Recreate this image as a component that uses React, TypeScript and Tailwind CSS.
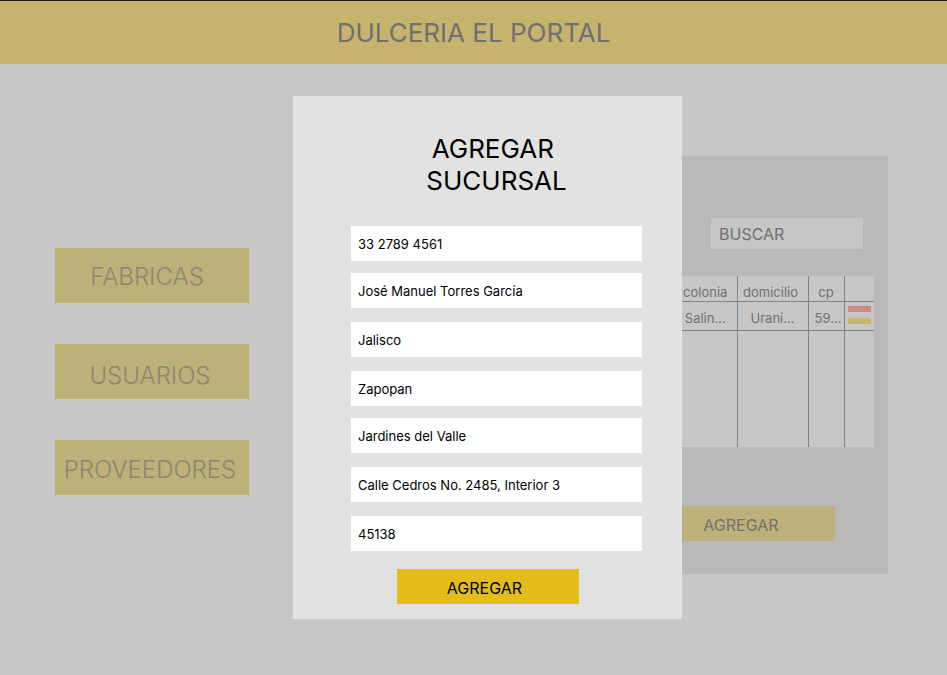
const navItems = [
  { label: "FABRICAS", pad: "pr-2.5 pt-0.5" },
  { label: "USUARIOS", pad: "pr-1 pt-2" },
  { label: "PROVEEDORES", pad: "pr-1 pt-1" },
];

const fields = [
  { name: "telefono", label: "Teléfono", value: "33 2789 4561", gap: "" },
  { name: "encargado", label: "Encargado", value: "José Manuel Torres García", gap: "mt-3" },
  { name: "estado", label: "Estado", value: "Jalisco", gap: "mt-3.5" },
  { name: "municipio", label: "Municipio", value: "Zapopan", gap: "mt-3.5" },
  { name: "colonia", label: "Colonia", value: "Jardines del Valle", gap: "mt-3" },
  { name: "domicilio", label: "Domicilio", value: "Calle Cedros No. 2485, Interior 3", gap: "mt-3.5" },
  { name: "cp", label: "Código postal", value: "45138", gap: "mt-3.5" },
];

function Header() {
  return (
    <header className="flex h-16 items-center justify-center border-t border-[#1e1e1e] bg-[#c5b36e]">
      <h1 className="text-[26px] leading-8 text-[#707070]">DULCERIA EL PORTAL</h1>
    </header>
  );
}

function Sidebar() {
  return (
    <nav className="mt-[184px] flex w-[194px] shrink-0 flex-col gap-[41px]">
      {navItems.map((item) => (
        <button
          key={item.label}
          type="button"
          className={`flex h-[55px] items-center justify-center bg-[#bdb079] text-2xl font-light text-[#8c8771] ${item.pad}`}
        >
          {item.label}
        </button>
      ))}
    </nav>
  );
}

function BranchTable() {
  return (
    <table className="mt-[27px] mr-3.5 w-[200px] table-fixed border-collapse bg-[#c7c7c7] text-center text-[13px] leading-4 text-[#707070]">
      <colgroup>
        <col className="w-[63px]" />
        <col className="w-[71px]" />
        <col className="w-9" />
        <col className="w-[30px]" />
      </colgroup>
      <thead>
        <tr className="h-[25px] border-b border-[#828282]">
          <th className="border-r border-[#828282] pt-2 font-normal">colonia</th>
          <th className="border-r border-[#828282] pt-2 pr-1 font-normal">domicilio</th>
          <th className="border-r border-[#828282] pt-2 font-normal">cp</th>
          <th />
        </tr>
      </thead>
      <tbody>
        <tr className="h-[29px] border-b border-[#828282]">
          <td className="border-r border-[#828282] pt-1">Salin...</td>
          <td className="border-r border-[#828282] pt-1">Urani...</td>
          <td className="border-r border-[#828282] pt-1 pl-1">59...</td>
          <td className="pb-0.5">
            <div className="flex flex-col items-center gap-1.5">
              <button type="button" aria-label="Eliminar" className="h-1.5 w-[23px] bg-[#c98a88]" />
              <button type="button" aria-label="Editar" className="h-1.5 w-[23px] bg-[#c6b769]" />
            </div>
          </td>
        </tr>
        <tr className="h-[117px]">
          <td className="border-r border-[#828282]" />
          <td className="border-r border-[#828282]" />
          <td className="border-r border-[#828282]" />
          <td />
        </tr>
      </tbody>
    </table>
  );
}

function BranchPanel() {
  return (
    <section className="mt-[92px] flex flex-1 flex-col items-end self-start bg-[#b9b9b9] pt-[62px] pb-[33px]">
      <input
        type="search"
        aria-label="Buscar"
        placeholder="BUSCAR"
        className="mr-[25px] h-[31px] w-[152px] bg-[#c6c6c6] px-2 text-base text-[#707070] outline-none placeholder:text-[#707070]"
      />
      <BranchTable />
      <button
        type="button"
        className="mt-[59px] mr-[53px] flex h-[35px] w-[182px] items-center justify-center bg-[#bdb079] pt-0.5 pr-1.5 text-base text-[#707070]"
      >
        AGREGAR
      </button>
    </section>
  );
}

function AddBranchDialog() {
  return (
    <div className="absolute inset-0 flex items-start justify-center pt-24 pl-7">
      <form
        role="dialog"
        aria-labelledby="dialog-title"
        onSubmit={(event) => event.preventDefault()}
        className="flex w-[389px] flex-col bg-[#e2e2e2] pt-[37px] pb-[15px]"
      >
        <div className="flex flex-col pr-10 pl-[58px]">
          <h2 id="dialog-title" className="mb-[29px] text-center text-[26px] leading-8 text-black">
            AGREGAR&nbsp;
            <br />
            SUCURSAL
          </h2>
          {fields.map((field) => (
            <input
              key={field.name}
              name={field.name}
              aria-label={field.label}
              defaultValue={field.value}
              className={`h-[35px] w-full bg-white px-[7px] text-[13px] text-black outline-none ${field.gap}`}
            />
          ))}
        </div>
        <button
          type="submit"
          className="mt-[18px] flex h-[35px] w-[182px] items-center justify-center self-center bg-[#e4bd1b] pt-0.5 pr-1.5 text-base text-black"
        >
          AGREGAR
        </button>
      </form>
    </div>
  );
}

export default function App() {
  return (
    <div className="relative min-h-screen bg-[#c7c7c7] font-['Inter',sans-serif]">
      <Header />
      <main className="flex gap-20 pr-[59px] pl-[55px]">
        <Sidebar />
        <BranchPanel />
      </main>
      <AddBranchDialog />
    </div>
  );
}
